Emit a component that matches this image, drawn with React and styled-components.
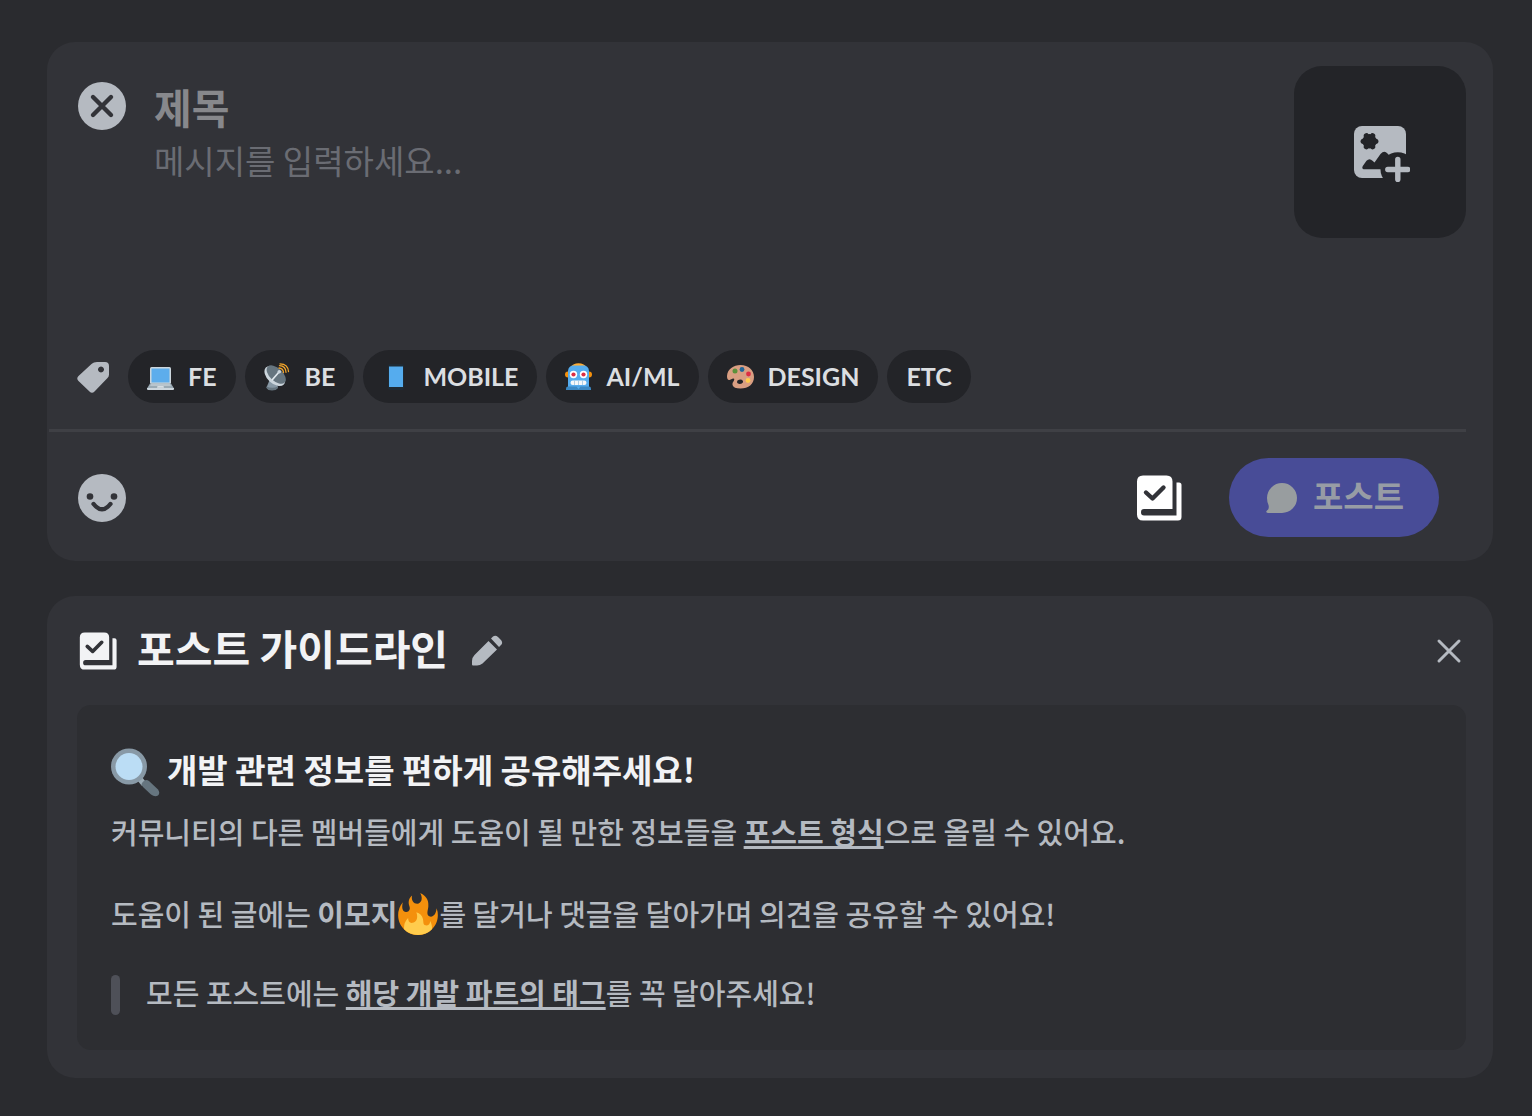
import React from "react";
import styled, { createGlobalStyle } from "styled-components";

const GlobalStyle = createGlobalStyle`
  * { box-sizing: border-box; }
  body {
    margin: 0;
    background: #2a2b2f;
    color: #b5bac1;
    font-family: "Noto Sans CJK KR", "Noto Sans", sans-serif;
  }
  button, input, textarea { font-family: inherit; }
`;

const Page = styled.main`
  display: flex;
  flex-direction: column;
  gap: 35px;
  padding: 42px 39px 38px 47px;
`;

const Card = styled.section`
  background: #323338;
  border-radius: 28px;
`;

const Composer = styled(Card)`
  display: flex;
  flex-direction: column;
`;

const Fields = styled.div`
  display: flex;
  align-items: flex-start;
  padding: 24px 27px 0 31px;
`;

const IconButton = styled.button`
  display: grid;
  place-items: center;
  flex: none;
  padding: 0;
  border: 0;
  background: none;
  color: ${(p) => p.$color || "#b5bac1"};
  cursor: pointer;
  svg { display: block; }
`;

const CloseSlot = styled.div`
  padding-top: 16px;
`;

const Texts = styled.div`
  flex: 1;
  min-width: 0;
  display: flex;
  flex-direction: column;
  padding: 14px 28px 0 28px;
`;

const TitleInput = styled.input`
  width: 100%;
  height: 52px;
  padding: 0;
  border: 0;
  outline: 0;
  background: none;
  color: #f2f3f5;
  font-size: 41px;
  font-weight: 700;
  line-height: 52px;
  &::placeholder { color: #87888c; opacity: 1; }
`;

const BodyInput = styled.textarea`
  width: 100%;
  height: 202px;
  padding: 4px 0 0;
  border: 0;
  outline: 0;
  resize: none;
  background: none;
  color: #dbdee1;
  font-size: 33px;
  line-height: 48px;
  &::placeholder { color: #6a6c73; opacity: 1; }
`;

const Upload = styled.button`
  display: grid;
  place-items: center;
  flex: none;
  width: 172px;
  height: 172px;
  padding: 0;
  border: 0;
  border-radius: 28px;
  background: #232428;
  color: #b5bac1;
`;

const Tags = styled.div`
  display: flex;
  flex-wrap: wrap;
  align-items: center;
  gap: 9px;
  padding: 16px 28px 26px 29px;
`;

const TagMark = styled.span`
  display: grid;
  margin-right: 9px;
  color: #b5bac1;
`;

const Tag = styled.button`
  display: flex;
  align-items: center;
  gap: 13px;
  height: 53px;
  padding: 0 19px;
  border: 0;
  border-radius: 27px;
  background: #232428;
  color: #dbdee1;
  font-family: Lato, "Noto Sans", sans-serif;
  font-size: 25px;
  font-weight: 700;
  line-height: 53px;
`;

const Divider = styled.hr`
  width: auto;
  height: 3px;
  margin: 0 27px 0 2px;
  border: 0;
  background: #3f4045;
`;

const Actions = styled.div`
  display: flex;
  align-items: center;
  padding: 26px 54px 24px 31px;
`;

const Spacer = styled.div`
  flex: 1;
`;

const Post = styled.button`
  display: flex;
  align-items: center;
  gap: 16px;
  height: 79px;
  margin-left: 47px;
  padding: 0 35px 0 37px;
  border: 0;
  border-radius: 40px;
  background: #484c97;
  color: #979ca5;
  font-size: 33px;
  font-weight: 700;
  line-height: 48px;
`;

const Label = styled.span`
  padding-bottom: 6px;
`;

const Guide = styled(Card)`
  padding: 25px 27px 28px 30px;
`;

const GuideHead = styled.header`
  display: flex;
  align-items: center;
  height: 60px;
  padding-left: 2px;
`;

const GuideTitle = styled.h2`
  margin: 0 23px 0 20px;
  padding-bottom: 8px;
  color: #f2f3f5;
  font-size: 41px;
  font-weight: 700;
  line-height: 52px;
`;

const CloseGuide = styled(IconButton)`
  margin: 0 4px 0 auto;
`;

const Panel = styled.div`
  margin-top: 24px;
  padding: 40px 34px 35px;
  border-radius: 14px;
  background: #2d2e32;
`;

const PanelTitle = styled.h3`
  display: flex;
  align-items: center;
  gap: 7px;
  margin: 0 0 12px;
  color: #f2f3f5;
  font-size: 33px;
  font-weight: 700;
  line-height: 48px;
`;

const Text = styled.p`
  margin: 0 0 ${(p) => p.$after || 0}px;
  font-size: 29px;
  font-weight: 500;
  line-height: 40px;
  b { font-weight: 700; }
`;

const Mark = styled.b`
  text-decoration: underline;
  text-decoration-thickness: 3px;
  text-underline-offset: 2px;
  text-decoration-skip-ink: none;
`;

const InlineIcon = styled.span`
  display: inline-block;
  vertical-align: -9px;
  height: 42px;
  width: 42px;
  svg { display: block; }
`;

const Quote = styled.blockquote`
  margin: 0;
  display: flex;
  gap: 26px;
  &::before {
    content: "";
    width: 9px;
    border-radius: 5px;
    background: #4e5058;
  }
  p {
    padding-bottom: 6px;
    line-height: 34px;
  }
`;

const CircleX = () => (
  <svg width="48" height="48" viewBox="0 0 48 48" aria-hidden="true">
    <circle cx="24" cy="24" r="24" fill="currentColor" />
    <path d="M15 15 33 33M33 15 15 33" stroke="#323338" strokeWidth="4.4" strokeLinecap="round" />
  </svg>
);

const Smile = () => (
  <svg width="48" height="48" viewBox="0 0 48 48" aria-hidden="true">
    <circle cx="24" cy="24" r="24" fill="currentColor" />
    <circle cx="12" cy="22.5" r="3.3" fill="#323338" />
    <circle cx="36" cy="22.5" r="3.3" fill="#323338" />
    <path d="M15.600 30Q24 40.500 32.400 30" fill="none" stroke="#323338" strokeWidth="4.400" strokeLinecap="round" />
  </svg>
);

const ImagePlus = () => (
  <svg width="60" height="60" viewBox="-3 -3 60 60" aria-hidden="true">
    <rect x="1" y="1" width="52" height="52" rx="8" fill="currentColor" />
    <g fill="#232428">
      <circle cx="16.500" cy="16.300" r="7.200" />
      {[0, 60, 120, 180, 240, 300].map((a) => (
        <circle key={a} cx="22.800" cy="16.300" r="2.600" transform={`rotate(${a} 16.5 16.3)`} />
      ))}
      <path d="M10.500 44.300Q8.500 43.500 9.800 41L13.500 35.800Q16.500 32.500 19.500 35.800L21.500 37.500L27.500 29Q31.300 25 34.500 28.500L38 32.500V44.300z" />
      <circle cx="44.800" cy="44.500" r="17.300" />
    </g>
    <path d="M44.800 34.500v20M34.800 44.500h20" stroke="currentColor" strokeWidth="5.400" strokeLinecap="round" />
  </svg>
);

const TagIcon = () => (
  <svg width="34" height="34" viewBox="0 0 34 34" aria-hidden="true">
    <path fillRule="evenodd" d="M18 2.500Q19.500 2 21 2H29Q33 2 33 6V14.500Q33 16.500 31.500 18L18.500 31.500Q16 34 13.500 31.500L2.500 21Q0 18.500 2.500 16L15.500 4Q16.500 3 18 2.500zM25 6.500a3 3 0 1 0 .01 0z" fill="currentColor" />
  </svg>
);

const Book = ({ size }) => (
  <svg width={size} height={size} viewBox="0 0 46 46" aria-hidden="true">
    <path d="M7 .5H30.500Q36.500 .5 36.500 6.500V34H8Q5 34 5 37.200T8 40.400H40.500V7.500H43Q45.500 7.500 45.500 10V42Q45.500 45.500 42 45.500H7Q1 45.500 1 39.500V6.500Q1 .5 7 .5z" fill="currentColor" />
    <path d="M10 17.500 16.500 23.500 27.500 12.500" fill="none" stroke="#323338" strokeWidth="4.400" strokeLinecap="round" strokeLinejoin="round" />
  </svg>
);

const Bubble = () => (
  <svg width="31" height="30" viewBox="0 0 31 30" aria-hidden="true">
    <path d="M16 0a15 15 0 1 1 0 30H2Q-1 29.500 1 27.500Q3.500 26 2.500 22Q1 18.500 1 15A15 15 0 0 1 16 0z" fill="#989d9f" />
  </svg>
);

const Pencil = () => (
  <svg width="32" height="32" viewBox="0 0 32 32" aria-hidden="true">
    <path d="M20 3.500 22 1.500Q24.500 0 27 2L30 5Q32 7.500 30.500 9.500L28 12zM17.500 6 26 14.500 11.500 28.500Q9 30.500 6 30.500H2Q1 30.500 1 29.500V26Q1 22.500 3.500 20z" fill="currentColor" />
  </svg>
);

const Cross = () => (
  <svg width="26" height="26" viewBox="0 0 26 26" aria-hidden="true">
    <path d="M3 3 23 23M23 3 3 23" stroke="currentColor" strokeWidth="3" strokeLinecap="round" />
  </svg>
);

const Laptop = () => (
  <svg width="28" height="28" viewBox="0 0 28 28" aria-hidden="true">
    <rect x="3" y="4" width="21" height="17" rx="1.500" fill="#ccd6dd" />
    <rect x="4.500" y="5.500" width="18" height="14" fill="#5dadec" />
    <path d="M3 20.500h21l3 5H0z" fill="#9aaab4" />
    <path d="M4 21h19l1 2H3z" fill="#b8c5cd" />
    <path d="M10.500 23h6l.5 1.800h-7z" fill="#d5dde2" />
    <path d="M0 25h27v1q0 1-1 1H1q-1 0-1-1z" fill="#ccd6dd" />
  </svg>
);

const Dish = () => (
  <svg width="28" height="28" viewBox="0 0 28 28" aria-hidden="true">
    <path d="M6 16 2.500 24.500q1 2.500 5.500 2.500t6-2.500L12 18z" fill="#8899a6" />
    <path d="M2.500 23.500q5.500 2.500 11.500 0v1.500q-2 2.500-6 2.500t-5.500-2.500z" fill="#66757f" />
    <ellipse cx="10.800" cy="13" rx="12.300" ry="7.500" transform="rotate(43 10.800 13)" fill="#ccd6dd" />
    <ellipse cx="12.200" cy="11.600" rx="11.600" ry="6.500" transform="rotate(43 12.200 11.600)" fill="#66757f" />
    <path d="M8.500 16.500 15 9" stroke="#e1e8ed" strokeWidth="1.700" strokeLinecap="round" />
    <circle cx="15.300" cy="8.800" r="1.800" fill="#ccd6dd" />
    <path d="M15 5a4.500 4.500 0 0 1 4.500 4.500M15.500 2.600Q21.800 3 22 9.300M16 .8Q24 1 24.500 8.500" fill="none" stroke="#f4a62a" strokeWidth="1.300" strokeLinecap="round" />
  </svg>
);

const Phone = () => (
  <svg width="28" height="28" viewBox="0 0 28 28" aria-hidden="true">
    <rect x="6" y="1" width="16" height="26" rx="2" fill="#1f2a33" />
    <rect x="7" y="3.500" width="14" height="20.500" fill="#55acee" />
  </svg>
);

const Robot = () => (
  <svg width="28" height="28" viewBox="0 0 28 28" aria-hidden="true">
    <path d="M6 4Q8 .3 13.500 .3T21 4z" fill="#ffac33" />
    <circle cx="3" cy="11.500" r="3" fill="#f4900c" />
    <circle cx="24" cy="11.500" r="3" fill="#f4900c" />
    <path d="M3 8Q3.500 2.500 8.500 2.500h10q5 0 5.500 5.500v16H3z" fill="#55acee" />
    <path d="M1 27v-1.500q0-2 2-2h21q2 0 2 2V27z" fill="#3b88c3" />
    <path d="m11.500 23.500 2 2.500 2-2.500z" fill="#55acee" />
    <circle cx="8.500" cy="11.500" r="3.700" fill="#fff" />
    <circle cx="18.500" cy="11.500" r="3.700" fill="#fff" />
    <circle cx="8.500" cy="11.500" r="2.100" fill="#dd2e44" />
    <circle cx="18.500" cy="11.500" r="2.100" fill="#dd2e44" />
    <rect x="5.500" y="17.500" width="16" height="4.500" rx="2.200" fill="#f5f8fa" />
    <path d="M9.500 17.500v4.500M13.500 17.500v4.500M17.500 17.500v4.500" stroke="#9fc4df" strokeWidth=".8" />
  </svg>
);

const Palette = () => (
  <svg width="28" height="28" viewBox="0 0 28 28" aria-hidden="true">
    <path fillRule="evenodd" d="M13.500 2C21.500 2 27 7 27 14S21.500 25.500 13.500 25.500Q6.500 25.500 5.500 22Q5 20 7 17.500Q8 15 6 15.500L2.500 17Q0 17.500 0 13C.5 6 6.500 2 13.500 2zM10.500 17.500q-1.500 3 2 3.500 4-.5 3.500-3-2-2.500-5.500-.5z" fill="#d99e82" />
    <circle cx="8" cy="8" r="2.500" fill="#5c913b" />
    <circle cx="15" cy="6.500" r="2.400" fill="#226699" />
    <circle cx="21.500" cy="11" r="2.400" fill="#dd2e44" />
    <circle cx="21" cy="17.500" r="2.400" fill="#ffcc4d" />
  </svg>
);

const Magnifier = () => (
  <svg width="49" height="49" viewBox="0 0 49 49" aria-hidden="true">
    <path d="m26 32 4-4 5 6-4 4z" fill="#9aaab4" />
    <path d="M31 35Q34 30.500 38 33L47 41.500Q49.500 45 47 47.500 44 49.500 40 46.500L32 39Q30 37 31 35z" fill="#66757f" />
    <circle cx="18" cy="18.500" r="18" fill="#8899a6" />
    <circle cx="18" cy="18.500" r="13.500" fill="#bbddf5" />
  </svg>
);

const Fire = () => (
  <svg width="42" height="42" viewBox="0 0 36 36" aria-hidden="true">
    <path d="M35 19a16.960 16.960 0 0 0-1.040-5.868c-.46 5.389-3.333 8.157-6.335 6.868-2.812-1.208-.917-5.917-.777-8.164.236-3.809-.012-8.169-6.931-11.794 2.875 5.500.333 8.917-2.333 9.125-2.958.231-5.667-2.542-4.667-7.042-3.238 2.386-3.332 6.402-2.333 9 1.042 2.708-.042 4.958-2.583 5.208-2.840.28-4.418-3.041-2.963-8.333A16.936 16.936 0 0 0 1 19c0 9.389 7.611 17 17 17s17-7.611 17-17z" fill="#f4900c" />
    <path d="M28.394 23.999c.148 3.084-2.561 4.293-4.019 3.709-2.106-.843-1.541-2.291-2.083-5.291s-2.625-5.083-5.708-6c2.250 6.333-1.247 8.667-3.080 9.084-1.872.426-3.753-.001-3.968-4.007A11.964 11.964 0 0 0 6 30c0 .368.023.73.055 1.090C9.125 34.124 13.342 36 18 36s8.875-1.876 11.945-4.910c.032-.36.055-.722.055-1.090 0-2.187-.584-4.236-1.606-6.001z" fill="#ffcc4d" />
  </svg>
);

const tags = [
  { label: "FE", Icon: Laptop },
  { label: "BE", Icon: Dish },
  { label: "MOBILE", Icon: Phone },
  { label: "AI/ML", Icon: Robot },
  { label: "DESIGN", Icon: Palette },
  { label: "ETC" },
];

export default function App() {
  return (
    <>
      <GlobalStyle />
      <Page>
        <Composer>
          <Fields>
            <CloseSlot>
              <IconButton type="button" aria-label="닫기"><CircleX /></IconButton>
            </CloseSlot>
            <Texts>
              <TitleInput aria-label="제목" placeholder="제목" />
              <BodyInput aria-label="메시지" placeholder="메시지를 입력하세요..." />
            </Texts>
            <Upload type="button" aria-label="이미지 추가"><ImagePlus /></Upload>
          </Fields>
          <Tags>
            <TagMark><TagIcon /></TagMark>
            {tags.map(({ label, Icon }) => (
              <Tag key={label} type="button">
                {Icon && <Icon />}
                {label}
              </Tag>
            ))}
          </Tags>
          <Divider />
          <Actions>
            <IconButton type="button" aria-label="이모지"><Smile /></IconButton>
            <Spacer />
            <IconButton type="button" aria-label="가이드라인 보기" $color="#ffffff"><Book size={46} /></IconButton>
            <Post type="button"><Bubble /><Label>포스트</Label></Post>
          </Actions>
        </Composer>

        <Guide>
          <GuideHead>
            <IconButton as="span" $color="#f2f3f5"><Book size={38} /></IconButton>
            <GuideTitle>포스트 가이드라인</GuideTitle>
            <IconButton type="button" aria-label="수정"><Pencil /></IconButton>
            <CloseGuide type="button" aria-label="가이드라인 닫기"><Cross /></CloseGuide>
          </GuideHead>
          <Panel>
            <PanelTitle><Magnifier /><Label>개발 관련 정보를 편하게 공유해주세요!</Label></PanelTitle>
            <Text $after={42}>
              커뮤니티의 다른 멤버들에게 도움이 될 만한 정보들을 <Mark>포스트 형식</Mark>으로 올릴 수 있어요.
            </Text>
            <Text $after={40}>
              도움이 된 글에는 <b>이모지</b><InlineIcon><Fire /></InlineIcon>를 달거나 댓글을 달아가며 의견을 공유할 수 있어요!
            </Text>
            <Quote>
              <Text>모든 포스트에는 <Mark>해당 개발 파트의 태그</Mark>를 꼭 달아주세요!</Text>
            </Quote>
          </Panel>
        </Guide>
      </Page>
    </>
  );
}
